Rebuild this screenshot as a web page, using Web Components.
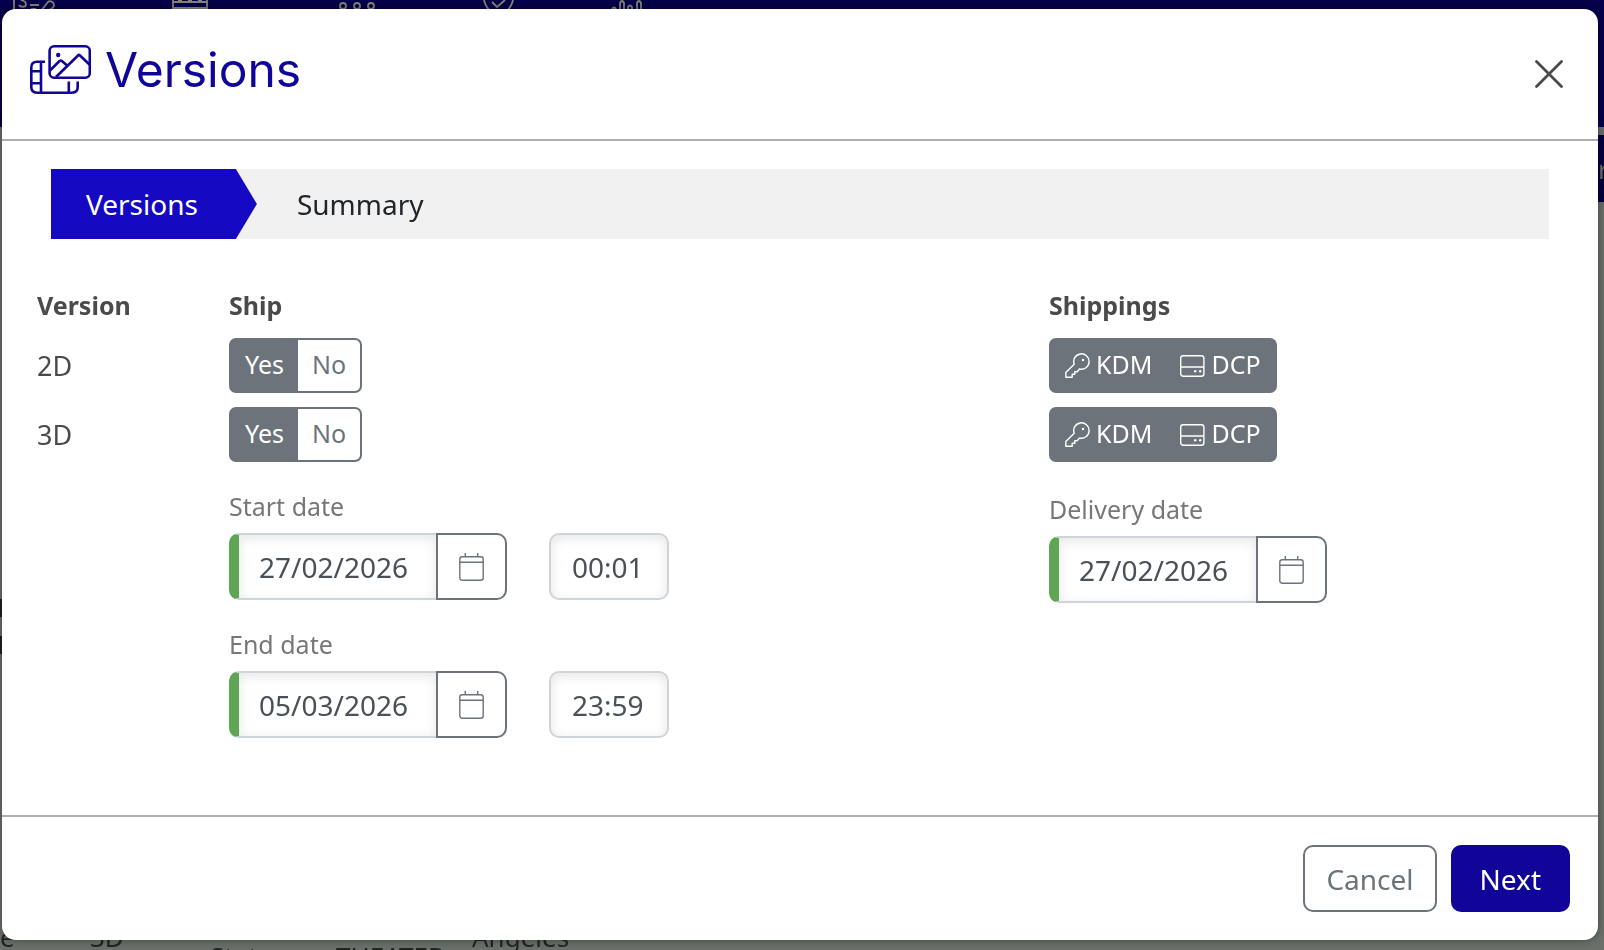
<!DOCTYPE html>
<html lang="en">
<head>
<meta charset="utf-8">
<title>Versions</title>
<style>
  body {
    margin: 0;
    min-height: 100vh;
    display: flex;
    overflow: hidden;
    background: #6a706a;
    color: #4a4a4a;
    font-family: "Noto Sans", "Open Sans", sans-serif;
    font-size: 25px;
    --gray: #6c737b;
    --navy: #100499;
  }
</style>
</head>
<body>
<page-backdrop></page-backdrop>
<modal-dialog heading="Versions">
  <step-bar steps="Versions,Summary" current="0"></step-bar>
  <version-form></version-form>
  <action-button slot="footer" label="Cancel"></action-button>
  <action-button slot="footer" label="Next" variant="primary"></action-button>
</modal-dialog>

<script>
// The dimmed page behind the dialog
class PageBackdrop extends HTMLElement {
  constructor() {
    super();
    this.attachShadow({ mode: 'open' });
    this.shadowRoot.innerHTML = `
      <style>
        :host {
          position: fixed;
          inset: 0;
          z-index: -1;
          display: flex;
          flex-direction: column;
          overflow: hidden;
          color: #242424;
          font-size: 26px;
          line-height: 34px;
        }
        header { height: 127px; background: #05004b; }
        header svg { display: block; }
        nav {
          height: 67px;
          margin: 8px 0 0 2px;
          background: #03003f;
          color: #6e6e62;
          display: flex;
          align-items: center;
          justify-content: flex-end;
        }
        nav span { width: 6px; overflow: hidden; white-space: nowrap; }
        main { flex: 1; display: flex; flex-direction: column; justify-content: space-between; }
        .block {
          width: 2px;
          height: 19px;
          margin-top: 397px;
          border: solid #222224;
          border-width: 18px 0;
        }
        .row {
          display: grid;
          grid-template-columns: 90px 120px 126px 136px 1fr;
          height: 30px;
          align-items: start;
        }
        .low { padding-top: 19px; }
      </style>
      <header>
        <svg width="660" height="12" fill="none" stroke="#85857a" stroke-width="1.8">
          <path d="M14 12V0M19 5c1 2 7 3 7-1s-6-3-6-6M30 5h9M40 12l8-10c2-2 6 0 6 3s-3 4-5 5M31 9h5"/>
          <path d="M173 12V0M207 12V0M173 8h34M173 2h34" />
          <path d="M178 1h4M188 1h4M198 1h4" stroke-width="3"/>
          <circle cx="343" cy="6" r="3"/><circle cx="357" cy="6" r="3"/><circle cx="371" cy="6" r="3"/>
          <path d="M484 0c1 5 3 8 7 12M513 0c-1 5-3 8-7 12M492 2l5 5 8-7"/>
          <path d="M612 9q2-3 4 0M620 12V3q2-4 4 0v9M628 12V7q2-3 4 0v5M637 12V3q2-4 4 0v9"/>
        </svg>
      </header>
      <nav><span>r</span></nav>
      <main>
        <div class="block"></div>
        <div class="row">
          <span>e</span><span>3D</span><span class="low">State</span><span class="low">THEATER</span><span>Angeles</span>
        </div>
      </main>
    `;
  }
}

class ModalDialog extends HTMLElement {
  constructor() {
    super();
    this.attachShadow({ mode: 'open' });
    this.shadowRoot.innerHTML = `
      <style>
        :host {
          flex: 1;
          display: flex;
          flex-direction: column;
          margin: 9px 6px 10px 2px;
          background: #fff;
          border-radius: 14px;
          box-shadow: 0 0 10px rgba(0, 0, 0, 0.4);
        }
        header {
          display: flex;
          align-items: center;
          padding: 0 28px;
          height: 130px;
          border-bottom: 2px solid #adadad;
        }
        .title { flex: 1; display: flex; align-items: center; gap: 14px; padding-bottom: 8px; }
        header svg { display: block; flex: none; }
        h1 {
          margin: 0;
          color: var(--navy);
          font: 400 48px/58px Inter, Lato, sans-serif;
        }
        button { border: 0; padding: 7px; background: none; color: #4a4a4a; }
        .body { flex: 1; padding: 28px 35px 0; }
        footer {
          display: flex;
          justify-content: flex-end;
          gap: 14px;
          padding: 28px;
          border-top: 2px solid #adadad;
        }
      </style>
      <header>
        <div class="title">
          <svg width="61" height="50" viewBox="0 0 61 50" fill="none" stroke="#100499" stroke-width="2.6" stroke-linejoin="round" aria-hidden="true">
            <rect x="19.6" y="1.3" width="40.2" height="31.4" rx="4.5"/>
            <circle cx="28.2" cy="10" r="2.2" fill="#100499" stroke="none"/>
            <path d="M26 32 48 10.5q1-1 2 0L60 20M20 25.500l9.500-9.500q1.200-1 2.400 0L36.500 20"/>
            <path d="M15 16.800H7q-5.700 0-5.700 5.700V42q0 5.700 5.700 5.700h35q5.700 0 5.700-5.700v-5.500M11 17v30.500M1 26.200h10M1 38.200h10M38.800 36.500v11"/>
          </svg>
          <h1></h1>
        </div>
        <button type="button" aria-label="Close">
          <svg width="28" height="28" fill="none" stroke="currentColor" stroke-width="2.8" stroke-linecap="round"><path d="M1.500 1.500l25 25M26.500 1.500l-25 25"/></svg>
        </button>
      </header>
      <div class="body"><slot></slot></div>
      <footer><slot name="footer"></slot></footer>
    `;
    this.shadowRoot.querySelector('h1').textContent = this.getAttribute('heading');
  }
}

class StepBar extends HTMLElement {
  constructor() {
    super();
    this.attachShadow({ mode: 'open' });
    const current = Number(this.getAttribute('current'));
    const items = this.getAttribute('steps').split(',').map((s, i) =>
      `<li${i === current ? ' class="active" aria-current="step"' : ''}>${s}</li>`).join('');
    this.shadowRoot.innerHTML = `
      <style>
        :host { display: block; margin: 0 14px; background: #f1f1f1; }
        ol { display: flex; gap: 5px; margin: 0; padding: 0; list-style: none; }
        li { padding: 0 35px; font-size: 28px; line-height: 70px; color: #212529; }
        .active {
          padding-right: 59px;
          background: #1508c2;
          color: #fff;
          clip-path: polygon(0 0, calc(100% - 21px) 0, 100% 50%, calc(100% - 21px) 100%, 0 100%);
        }
      </style>
      <ol>${items}</ol>
    `;
  }
}

const ICONS = {
  key: `<path d="M9.200 11.300.8 19.600v4.700h6.400v-3h2.600v-2.600h2.400l2.300-2.700A7.700 7.700 0 1 0 9.200 11.300z"/><circle cx="18" cy="7" r="1.200" fill="currentColor" stroke="none"/>`,
  disk: `<rect x=".700" y="2.700" width="23.200" height="20.600" rx="2.500"/><path d="M.700 14H24"/><circle cx="15.200" cy="18.300" r="1.200" fill="currentColor" stroke="none"/><circle cx="20.200" cy="18.300" r="1.200" fill="currentColor" stroke="none"/>`
};

// Segmented group of radios or checkboxes
class ToggleGroup extends HTMLElement {
  constructor() {
    super();
    this.attachShadow({ mode: 'open' });
    const type = this.getAttribute('type') || 'radio';
    const checked = (this.getAttribute('checked') || '').split(',');
    const icons = (this.getAttribute('icons') || '').split(',');
    const items = this.getAttribute('options').split(',').map((o, i) => `
      <label>
        <input type="${type}" name="option" ${checked.includes(o) ? 'checked' : ''}>
        ${icons[i] ? `<svg width="25" height="26" fill="none" stroke="currentColor" stroke-width="1.400" stroke-linejoin="round">${ICONS[icons[i]]}</svg>` : ''}
        <span>${o}</span>
      </label>`).join('');
    this.shadowRoot.innerHTML = `
      <style>
        :host {
          display: inline-flex;
          vertical-align: top;
          height: 51px;
          border: 2px solid var(--gray);
          border-radius: 7px;
          background: var(--gray);
          overflow: hidden;
          font-size: 25px;
          color: var(--gray);
        }
        label {
          position: relative;
          display: flex;
          align-items: center;
          gap: 6px;
          padding: 0 14px;
          background: #fff;
        }
        span { padding-bottom: 2px; }
        label:has(:checked) { background: var(--gray); color: #fff; }
        input { position: absolute; inset: 0; margin: 0; opacity: 0; }
      </style>
      ${items}
    `;
  }
}

class DateField extends HTMLElement {
  constructor() {
    super();
    this.attachShadow({ mode: 'open' });
    const time = this.getAttribute('time');
    const label = this.getAttribute('label');
    this.shadowRoot.innerHTML = `
      <style>
        :host { display: block; }
        label { display: block; line-height: 34px; margin-bottom: 10px; color: #777; }
        .row, .group { display: flex; }
        .row { gap: 42px; }
        input {
          box-sizing: border-box;
          height: 67px;
          margin: 0;
          border: 2px solid #ced4da;
          border-radius: 10px;
          background: #fff;
          box-shadow: inset 0 3px 12px rgba(0, 0, 0, 0.1);
          color: #495057;
          font: 28px "Noto Sans", "Open Sans", sans-serif;
          outline: 0;
        }
        .date {
          width: 207px;
          padding: 0 0 0 20px;
          border-left: 10px solid #5fa654;
          border-right: 0;
          border-radius: 10px 0 0 10px;
        }
        .time { width: 120px; padding: 0 0 0 21px; }
        button {
          width: 71px;
          height: 67px;
          padding: 0;
          border: 2px solid var(--gray);
          border-radius: 0 10px 10px 0;
          background: #fff;
          color: var(--gray);
        }
        svg { display: block; margin: 0 auto; }
      </style>
      <label for="date">${label}</label>
      <div class="row">
        <div class="group">
          <input class="date" id="date" type="text" value="${this.getAttribute('value')}">
          <button type="button" aria-label="Pick date">
            <svg width="25" height="28" fill="none" stroke="currentColor" stroke-width="1.400"><rect x=".800" y="3.800" width="23.400" height="23.400" rx="2.500"/><path d="M.800 9.200h23.400M6.300 0v4M18.700 0v4"/></svg>
          </button>
        </div>
        ${time ? `<input class="time" type="text" aria-label="${label} time" value="${time}">` : ''}
      </div>
    `;
  }
}

class VersionForm extends HTMLElement {
  constructor() {
    super();
    this.attachShadow({ mode: 'open' });
    const rows = ['2D', '3D'].map(v => `
      <tr>
        <td>${v}</td>
        <td><toggle-group options="Yes,No" checked="Yes"></toggle-group></td>
        <td><toggle-group type="checkbox" options="KDM,DCP" checked="KDM,DCP" icons="key,disk"></toggle-group></td>
      </tr>`).join('');
    this.shadowRoot.innerHTML = `
      <style>
        :host { display: block; margin-top: 50px; }
        table { width: 100%; table-layout: fixed; border-collapse: collapse; }
        th, td { padding: 0; text-align: left; vertical-align: top; }
        th { height: 49px; line-height: 32px; font-weight: 700; }
        td { height: 69px; font-size: 27px; line-height: 55px; }
        .first { width: 192px; }
        .last { width: 514px; }
        .dates { display: flex; padding: 13px 0 0 192px; }
        .ship { flex: 1; display: grid; gap: 27px; }
        .delivery { width: 514px; padding-top: 3px; }
      </style>
      <table>
        <thead><tr><th class="first">Version</th><th>Ship</th><th class="last">Shippings</th></tr></thead>
        <tbody>${rows}</tbody>
      </table>
      <div class="dates">
        <div class="ship">
          <date-field label="Start date" value="27/02/2026" time="00:01"></date-field>
          <date-field label="End date" value="05/03/2026" time="23:59"></date-field>
        </div>
        <div class="delivery">
          <date-field label="Delivery date" value="27/02/2026"></date-field>
        </div>
      </div>
    `;
  }
}

class ActionButton extends HTMLElement {
  constructor() {
    super();
    this.attachShadow({ mode: 'open' });
    this.shadowRoot.innerHTML = `
      <style>
        :host { display: block; }
        button {
          height: 67px;
          padding: 0 21px;
          border: 2px solid var(--gray);
          border-radius: 10px;
          background: #fff;
          color: var(--gray);
          font: 28px "Noto Sans", "Open Sans", sans-serif;
        }
        .primary { padding: 0 27px; border-color: var(--navy); background: var(--navy); color: #fff; }
      </style>
      <button type="button" class="${this.getAttribute('variant') || ''}">${this.getAttribute('label')}</button>
    `;
  }
}

customElements.define('page-backdrop', PageBackdrop);
customElements.define('modal-dialog', ModalDialog);
customElements.define('step-bar', StepBar);
customElements.define('toggle-group', ToggleGroup);
customElements.define('date-field', DateField);
customElements.define('version-form', VersionForm);
customElements.define('action-button', ActionButton);
</script>
</body>
</html>
